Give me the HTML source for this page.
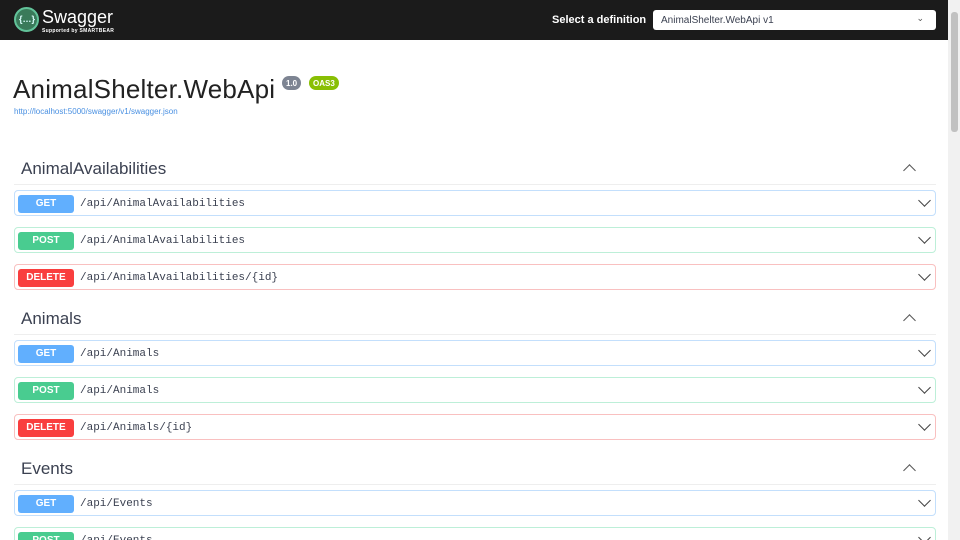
<!DOCTYPE html>
<html style="overflow:hidden;height:540px"><head><meta charset="utf-8"><style>
*{box-sizing:border-box;margin:0;padding:0}
body{width:960px;height:540px;overflow:hidden;background:#fff;font-family:"Liberation Sans",sans-serif;position:relative;color:#3b4151}
.top{position:absolute;left:0;top:0;width:948px;height:40px;background:#1b1b1b}
.logo{position:absolute;left:14px;top:7px;width:25px;height:25px;border-radius:50%;background:#3a7a5a;border:2px solid #62c39a}
.logo:after{content:"{…}";position:absolute;left:3px;top:5px;font-size:9px;color:#dff;font-weight:bold}
.sw{position:absolute;left:42px;top:7px;color:#fff;font-size:18px}
.sb{position:absolute;left:42px;top:28px;color:#fff;font-size:5px;font-weight:bold;letter-spacing:.3px}
.sel-l{position:absolute;left:552px;top:14px;color:#fff;font-weight:bold;font-size:11px}
.sel{position:absolute;left:653px;top:10px;width:283px;height:20px;background:#fff;border-radius:3px;font-size:10px;color:#3b4151;padding:5px 8px}
.sel span{position:absolute;right:12px;top:3px;font-size:9px;color:#555}
.scroll{position:absolute;left:948px;top:0;width:12px;height:540px;background:#f1f1f1}
.thumb{position:absolute;left:951px;top:12px;width:7px;height:120px;background:#c1c1c1;border-radius:3px}
h1{position:absolute;left:13px;top:74px;font-size:26px;font-weight:normal;color:#222;letter-spacing:.2px}
.v{position:absolute;top:76px;height:14px;border-radius:7px;font-size:8px;color:#fff;font-weight:bold;padding:3px 4px;background:#7d8492}
.link{position:absolute;left:14px;top:107px;font-size:8px;color:#4990e2}
.sec{position:absolute;left:14px;width:922px}
.sh{height:35px;border-bottom:1px solid #eee;font-size:17px;padding:9px 0 0 7px;position:relative}
.up{position:absolute;right:22px;top:16px;width:9px;height:9px;border-left:1.5px solid #555;border-top:1.5px solid #555;transform:rotate(45deg)}
.op{position:relative;height:26px;border:1px solid;border-radius:4px;margin-top:5px;margin-bottom:11px}
.op .b{position:absolute;left:3px;top:4px;width:56px;height:18px;border-radius:3px;color:#fff;font-weight:bold;font-size:10px;text-align:center;line-height:18px}
.op .p{position:absolute;left:65px;top:7px;font-family:"Liberation Mono",monospace;font-size:11px;color:#3b4151}
.op .dn{position:absolute;right:6px;top:5px;width:9px;height:9px;border-right:1.5px solid #444;border-bottom:1.5px solid #444;transform:rotate(45deg)}
.get{border-color:#c3dffc;background:#fff}.get .b{background:#61affe}
.post{border-color:#bdefd8;background:#fff}.post .b{background:#49cc90}
.del{border-color:#f9c0c0;background:#fff}.del .b{background:#f93e3e}
</style></head><body>
<div class="top"><div class="logo"></div><div class="sw">Swagger</div><div class="sb">Supported by SMARTBEAR</div>
<div class="sel-l">Select a definition</div><div class="sel">AnimalShelter.WebApi v1<span>⌄</span></div></div>
<div class="scroll"></div><div class="thumb"></div>
<h1>AnimalShelter.WebApi</h1>
<div class="v" style="left:282px">1.0</div><div class="v" style="left:309px;background:#89bf04">OAS3</div>
<div class="link">http://localhost:5000/swagger/v1/swagger.json</div>

<div class="sec" style="top:150px"><div class="sh">AnimalAvailabilities<div class="up"></div></div>
<div class="op get"><div class="b">GET</div><div class="p">/api/AnimalAvailabilities</div><div class="dn"></div></div>
<div class="op post"><div class="b">POST</div><div class="p">/api/AnimalAvailabilities</div><div class="dn"></div></div>
<div class="op del"><div class="b">DELETE</div><div class="p">/api/AnimalAvailabilities/{id}</div><div class="dn"></div></div></div>

<div class="sec" style="top:300px"><div class="sh">Animals<div class="up"></div></div>
<div class="op get"><div class="b">GET</div><div class="p">/api/Animals</div><div class="dn"></div></div>
<div class="op post"><div class="b">POST</div><div class="p">/api/Animals</div><div class="dn"></div></div>
<div class="op del"><div class="b">DELETE</div><div class="p">/api/Animals/{id}</div><div class="dn"></div></div></div>

<div class="sec" style="top:450px"><div class="sh">Events<div class="up"></div></div>
<div class="op get"><div class="b">GET</div><div class="p">/api/Events</div><div class="dn"></div></div>
<div class="op post"><div class="b">POST</div><div class="p">/api/Events</div><div class="dn"></div></div></div>
</body></html>
